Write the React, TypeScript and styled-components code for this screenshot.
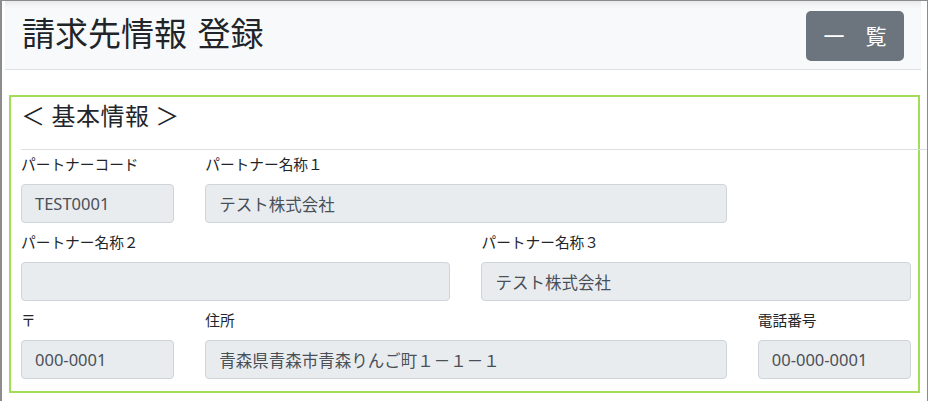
import React from "react";
import styled, { createGlobalStyle } from "styled-components";

const Global = createGlobalStyle`
  html, body { margin: 0; padding: 0; background: #fff; }
  body {
    font-family: "Noto Sans", "Noto Sans CJK JP", sans-serif;
    color: #212529;
  }
  * { box-sizing: border-box; }
`;

const Frame = styled.div`
  width: 928px;
  height: 401px;
  border-left: 2px solid #8c8c8c;
  border-top: 1px solid #8c8c8c;
  border-right: 1px solid #8c8c8c;
  padding-left: 3px;
  padding-right: 6px;
  overflow: hidden;
`;

const Header = styled.header`
  height: 69px;
  background: #f8f9fa;
  border-bottom: 1px solid #dee2e6;
  box-shadow: inset 0 7px 7px -5px rgba(0, 0, 0, 0.09);
  display: flex;
  align-items: center;
  justify-content: space-between;
  padding: 0 17px 0 17px;
`;

const Title = styled.h1`
  margin: -6px 0 0 0;
  font-size: 33px;
  font-weight: 400;
  line-height: 1;
  font-family: "Noto Sans CJK JP", sans-serif;
  color: #212529;
  word-spacing: 3px;
`;

const ListButton = styled.button`
  width: 98px;
  height: 50px;
  border: none;
  border-radius: 5px;
  background: #6c757d;
  color: #fff;
  font-family: "Noto Sans CJK JP", sans-serif;
  font-size: 21px;
  line-height: 1;
  padding: 0;
  margin-top: 1px;
  cursor: pointer;
`;

const Card = styled.section`
  margin: 25px 1px 0 4px;
  border: 2px solid #a3dd58;
  height: 298px;
  padding: 0 7px 0 10px;
`;

const CardTitle = styled.h2`
  margin: 0;
  padding: 1px 0 0 0;
  height: 52px;
  font-size: 24px;
  font-weight: 400;
  line-height: 34px;
  font-family: "Noto Sans CJK JP", sans-serif;
  color: #212529;
  letter-spacing: 0.5px;
`;

const Rule = styled.hr`
  margin: 0 -20px 0 0;
  border: none;
  border-top: 1px solid #dcdfe2;
`;

const FormGrid = styled.div`
  display: grid;
  grid-template-columns: repeat(10, 1fr);
  column-gap: 31px;
  margin-top: -5px;
`;

const Field = styled.div<{ $span: number; $start?: number }>`
  grid-column: ${(p) => (p.$start ? `${p.$start} / span ${p.$span}` : `span ${p.$span}`)};
  display: flex;
  flex-direction: column;
`;

const Label = styled.label`
  font-family: "Noto Sans CJK JP", sans-serif;
  font-size: 14.7px;
  line-height: 22px;
  height: 22px;
  margin-top: 8px;
  margin-bottom: 9px;
  color: #212529;
`;

const Input = styled.div`
  height: 39px;
  background: #e9ecef;
  border: 1px solid #ced4da;
  border-radius: 4px;
  padding: 0 12px 0 13px;
  display: flex;
  align-items: center;
  font-family: "Noto Sans", "Noto Sans CJK JP", sans-serif;
  font-size: 16.5px;
  color: #495057;
  white-space: nowrap;
`;

type F = { label: string; value: string; span: number; start?: number };

const rows: F[][] = [
  [
    { label: "パートナーコード", value: "TEST0001", span: 2 },
    { label: "パートナー名称１", value: "テスト株式会社", span: 6 },
  ],
  [
    { label: "パートナー名称２", value: "", span: 5, start: 1 },
    { label: "パートナー名称３", value: "テスト株式会社", span: 5 },
  ],
  [
    { label: "〒", value: "000-0001", span: 2, start: 1 },
    { label: "住所", value: "青森県青森市青森りんご町１－１－１", span: 6 },
    { label: "電話番号", value: "00-000-0001", span: 2 },
  ],
];

export default function App() {
  return (
    <>
      <Global />
      <Frame>
        <Header>
          <Title>請求先情報 登録</Title>
          <ListButton>一　覧</ListButton>
        </Header>
        <Card>
          <CardTitle>＜ 基本情報 ＞</CardTitle>
          <Rule />
          <FormGrid>
            {rows.map((row) =>
              row.map((f) => (
                <Field key={f.label} $span={f.span} $start={f.start}>
                  <Label>{f.label}</Label>
                  <Input>{f.value}</Input>
                </Field>
              ))
            )}
          </FormGrid>
        </Card>
      </Frame>
    </>
  );
}
